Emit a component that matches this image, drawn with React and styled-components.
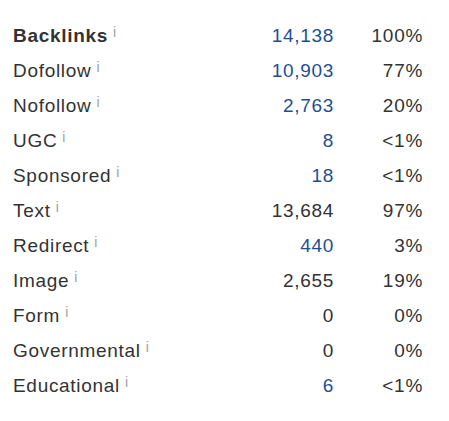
import React from 'react';
import styled, { createGlobalStyle } from 'styled-components';

const GlobalStyle = createGlobalStyle`
  body {
    margin: 0;
    background: #fff;
    font-family: "Liberation Sans", Arial, Helvetica, sans-serif;
  }
`;

const Table = styled.div`
  display: grid;
  grid-template-columns: 1fr 90px 89px;
  width: 410px;
  padding: 18px 0 0 13px;
  color: #333;
  font-size: 19px;
  letter-spacing: 0.7px;
`;

const Cell = styled.div`
  height: 35px;
  display: flex;
  align-items: center;
  justify-content: ${props => (props.right ? 'flex-end' : 'flex-start')};
  font-weight: ${props => (props.bold ? 700 : 400)};
  color: ${props => (props.link ? '#1d4f91' : '#333')};
  white-space: nowrap;
`;

const Info = styled.span`
  align-self: flex-start;
  margin: 7px 0 0 5px;
  font-size: 14px;
  line-height: 14px;
  font-weight: 400;
  letter-spacing: 0;
  color: #a0a0a0;
`;

const rows = [
  ['Backlinks', '14,138', '100%', true, true],
  ['Dofollow', '10,903', '77%', true],
  ['Nofollow', '2,763', '20%', true],
  ['UGC', '8', '<1%', true],
  ['Sponsored', '18', '<1%', true],
  ['Text', '13,684', '97%', false],
  ['Redirect', '440', '3%', true],
  ['Image', '2,655', '19%', false],
  ['Form', '0', '0%', false],
  ['Governmental', '0', '0%', false],
  ['Educational', '6', '<1%', true],
];

export default function App() {
  return (
    <>
      <GlobalStyle />
      <Table>
        {rows.map(([label, count, pct, link, bold]) => (
          <React.Fragment key={label}>
            <Cell bold={bold}>
              {label}
              <Info>i</Info>
            </Cell>
            <Cell right link={link}>{count}</Cell>
            <Cell right>{pct}</Cell>
          </React.Fragment>
        ))}
      </Table>
    </>
  );
}
